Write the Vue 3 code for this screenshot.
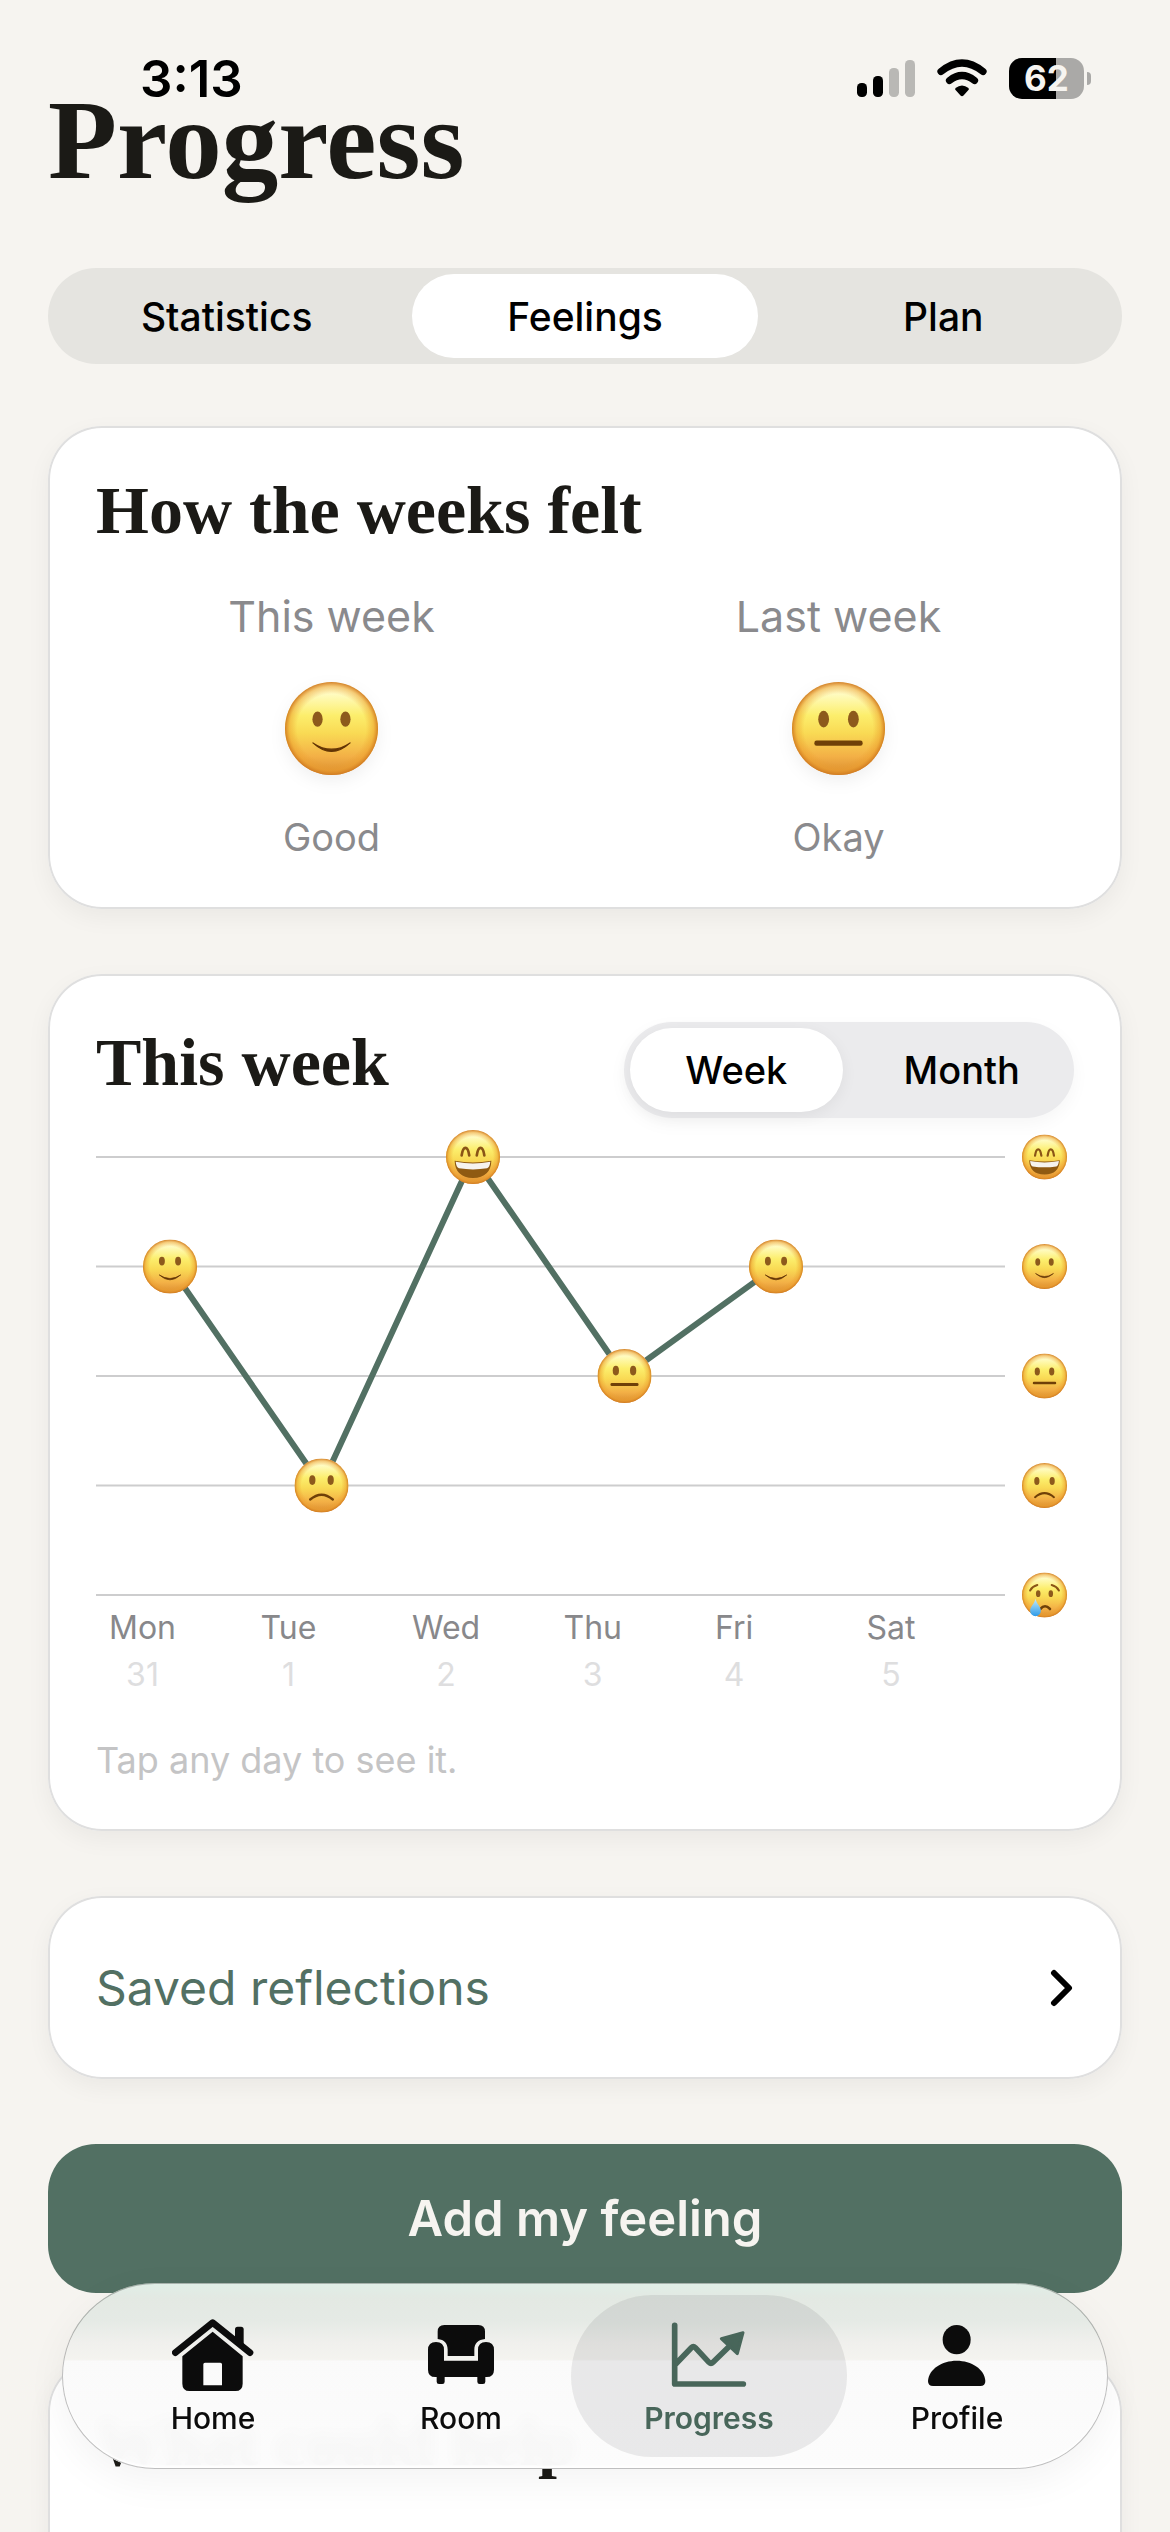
<script setup>
import { ref, computed } from 'vue'

const sections = ['Statistics', 'Feelings', 'Plan']
const section = ref('Feelings')
const ranges = ['Week', 'Month']
const range = ref('Week')

const summary = [
  { title: 'This week', mood: 'good', label: 'Good' },
  { title: 'Last week', mood: 'okay', label: 'Okay' }
]

const scale = ['great', 'good', 'okay', 'bad', 'awful']
const days = [
  { name: 'Mon', date: 31, mood: 'good' },
  { name: 'Tue', date: 1, mood: 'bad' },
  { name: 'Wed', date: 2, mood: 'great' },
  { name: 'Thu', date: 3, mood: 'okay' },
  { name: 'Fri', date: 4, mood: 'good' },
  { name: 'Sat', date: 5, mood: null }
]

const rowY = (i) => 27 + i * 109.5
const points = computed(() =>
  days
    .map((d, i) => ({ mood: d.mood, x: 74 + i * 151.5, y: rowY(scale.indexOf(d.mood)) }))
    .filter((p) => p.mood)
)
const line = computed(() => points.value.map((p) => `${p.x},${p.y}`).join(' '))

const tabs = ['Home', 'Room', 'Progress', 'Profile']
const tab = ref('Progress')
</script>

<template>
  <div class="screen">
    <svg class="defs" width="0" height="0" aria-hidden="true">
      <defs>
        <linearGradient id="face-fill" x1="0" y1="0" x2="0" y2="1">
          <stop offset="0" stop-color="#fffbd2" />
          <stop offset="0.12" stop-color="#fffcc4" />
          <stop offset="0.36" stop-color="#fcee6c" />
          <stop offset="0.55" stop-color="#f9da54" />
          <stop offset="0.8" stop-color="#f3b046" />
          <stop offset="1" stop-color="#d98b30" />
        </linearGradient>
        <radialGradient id="face-rim" cx="0.5" cy="0.5" r="0.5">
          <stop offset="0.74" stop-color="#eb9d2c" stop-opacity="0" />
          <stop offset="0.9" stop-color="#eb9d2c" stop-opacity="0.5" />
          <stop offset="1" stop-color="#d07a20" stop-opacity="0.95" />
        </radialGradient>
        <linearGradient id="tear-fill" x1="0" y1="0" x2="0" y2="1">
          <stop offset="0" stop-color="#c4ecff" />
          <stop offset="1" stop-color="#2e9be8" />
        </linearGradient>
        <symbol id="mood-great" viewBox="0 0 100 100">
          <circle cx="50" cy="50" r="50" fill="url(#face-fill)" />
          <circle cx="50" cy="50" r="50" fill="url(#face-rim)" />
          <path d="M29 47 Q31 33 36 33 T43 47 M57 47 Q59 33 64 33 T71 47" fill="none" stroke="#8a5516" stroke-width="5" stroke-linecap="round" />
          <path d="M16 57 Q50 63 84 57 Q83 88 50 89 Q17 88 16 57Z" fill="#8f5a12" />
          <path d="M18 59 Q50 65 82 59 Q81 70 76 71 Q50 75 24 71 Q19 70 18 59Z" fill="#f6f3ee" />
        </symbol>
        <symbol id="mood-good" viewBox="0 0 100 100">
          <circle cx="50" cy="50" r="50" fill="url(#face-fill)" />
          <circle cx="50" cy="50" r="50" fill="url(#face-rim)" />
          <ellipse cx="35" cy="40" rx="5.5" ry="8.2" fill="#8d5a1c" />
          <ellipse cx="65" cy="40" rx="5.5" ry="8.2" fill="#8d5a1c" />
          <path d="M30 65.5 Q50 79 70 65.5 Q50 84 30 65.5Z" fill="#633505" stroke="#633505" stroke-width="1.2" stroke-linejoin="round" />
        </symbol>
        <symbol id="mood-okay" viewBox="0 0 100 100">
          <circle cx="50" cy="50" r="50" fill="url(#face-fill)" />
          <circle cx="50" cy="50" r="50" fill="url(#face-rim)" />
          <ellipse cx="34" cy="40" rx="5.8" ry="9" fill="#8d5a1c" />
          <ellipse cx="66" cy="40" rx="5.8" ry="9" fill="#8d5a1c" />
          <rect x="24" y="63" width="52" height="5.5" rx="2.5" fill="#6f4008" />
        </symbol>
        <symbol id="mood-bad" viewBox="0 0 100 100">
          <circle cx="50" cy="50" r="50" fill="url(#face-fill)" />
          <circle cx="50" cy="50" r="50" fill="url(#face-rim)" />
          <ellipse cx="33" cy="40" rx="5.8" ry="9" fill="#8d5a1c" />
          <ellipse cx="67" cy="40" rx="5.8" ry="9" fill="#8d5a1c" />
          <path d="M29 76 Q50 58 71 76" fill="none" stroke="#6f4008" stroke-width="4.5" stroke-linecap="round" />
        </symbol>
        <symbol id="mood-awful" viewBox="0 0 100 100">
          <circle cx="50" cy="50" r="50" fill="url(#face-fill)" />
          <circle cx="50" cy="50" r="50" fill="url(#face-rim)" />
          <ellipse cx="36" cy="47" rx="5" ry="7.5" fill="#8d5a1c" />
          <ellipse cx="64" cy="47" rx="5" ry="7.5" fill="#8d5a1c" />
          <path d="M18 40 Q23 31 34 28 M66 28 Q77 31 82 40" fill="none" stroke="#8a5516" stroke-width="4.5" stroke-linecap="round" />
          <path d="M41 81 Q51 69 62 81" fill="none" stroke="#6f4008" stroke-width="6" stroke-linecap="round" />
          <path d="M30 58 C32 70 42 76 42 85 A12 12 0 0 1 18 85 C18 76 28 70 30 58Z" fill="url(#tear-fill)" />
        </symbol>
      </defs>
    </svg>

    <header class="status">
      <span class="time">3:13</span>
      <div class="indicators">
        <svg width="58" height="38" viewBox="0 0 58 38" aria-label="Signal">
          <rect x="0" y="24" width="10" height="14" rx="4.5" />
          <rect x="16" y="17" width="10" height="21" rx="4.5" />
          <rect x="32" y="9" width="10" height="29" rx="4.5" fill="#b9b8b5" />
          <rect x="48" y="1" width="10" height="37" rx="4.5" fill="#b9b8b5" />
        </svg>
        <svg width="50" height="38" viewBox="0 0 50 38" aria-label="Wi-Fi">
          <path d="M4 12.5 Q25 -4.5 46 12.5 M12.5 21.5 Q25 11.5 37.5 21.5" fill="none" stroke="#000" stroke-width="7.2" stroke-linecap="round" />
          <path d="M18.5 29 Q25 24 31.5 29 Q32.5 30.5 31 31.5 L26.5 36.5 Q25 38 23.5 36.5 L19 31.5 Q17.5 30.5 18.5 29Z" />
        </svg>
        <div class="battery"><span>62</span></div>
      </div>
    </header>

    <main>
      <h1>Progress</h1>

      <div class="segmented" role="tablist">
        <button v-for="s in sections" :key="s" type="button" role="tab" :aria-selected="section === s" :class="{ on: section === s }" @click="section = s">{{ s }}</button>
      </div>

      <section class="card">
        <h2>How the weeks felt</h2>
        <div class="weeks">
          <div v-for="w in summary" :key="w.title" class="week">
            <h3>{{ w.title }}</h3>
            <svg class="face" role="img" :aria-label="w.label"><use :href="`#mood-${w.mood}`" /></svg>
            <p>{{ w.label }}</p>
          </div>
        </div>
      </section>

      <section class="card">
        <div class="chart-head">
          <h2>This week</h2>
          <div class="segmented range" role="tablist">
            <button v-for="r in ranges" :key="r" type="button" role="tab" :aria-selected="range === r" :class="{ on: range === r }" @click="range = r">{{ r }}</button>
          </div>
        </div>
        <svg class="chart" viewBox="0 0 978 492" role="img" aria-label="Feelings by day">
          <line v-for="(m, i) in scale" :key="m" x1="0" x2="909" :y1="rowY(i)" :y2="rowY(i)" stroke="#cdcdce" stroke-width="2" />
          <polyline :points="line" fill="none" stroke="#527063" stroke-width="6" stroke-linejoin="round" />
          <use v-for="p in points" :key="p.x" :href="`#mood-${p.mood}`" :x="p.x - 27" :y="p.y - 27" width="54" height="54" />
          <use v-for="(m, i) in scale" :key="m" :href="`#mood-${m}`" x="926" :y="rowY(i) - 22.5" width="45" height="45" />
        </svg>
        <div class="days">
          <button v-for="d in days" :key="d.name" type="button">
            <span>{{ d.name }}</span>
            <span class="date">{{ d.date }}</span>
          </button>
        </div>
        <p class="hint">Tap any day to see it.</p>
      </section>

      <a class="card link" href="#">
        <span>Saved reflections</span>
        <svg width="24" height="38" viewBox="0 0 24 38" aria-hidden="true"><path d="M4 4 L19 19 L4 34" fill="none" stroke="#000" stroke-width="6" stroke-linecap="round" stroke-linejoin="round" /></svg>
      </a>

      <button class="primary" type="button">Add my feeling</button>

      <section class="card">
        <h2>What could help</h2>
        <div class="row"><span>Calm</span><span class="muted">4 days</span></div>
      </section>
    </main>

    <nav class="tabbar">
      <a v-for="t in tabs" :key="t" href="#" :class="{ current: tab === t }" @click.prevent="tab = t">
        <svg viewBox="0 0 246 216" aria-hidden="true">
          <g v-if="t === 'Home'">
            <path d="M10 101 L122 11 L234 101" fill="none" stroke="currentColor" stroke-width="20" stroke-linecap="round" stroke-linejoin="round" />
            <path d="M189 64 V31 Q189 23 197 23 H207 Q215 23 215 31 V84Z" />
            <path fill-rule="evenodd" d="M122 38 L212 112 V194 Q212 216 190 216 H53 Q31 216 31 194 V112Z M99 131 Q94 131 94 136 V199 H150 V136 Q150 131 145 131Z" />
          </g>
          <g v-else-if="t === 'Room'">
            <path d="M53 38 Q53 18 73 18 H175 Q195 18 195 38 V60 C174 62 163 74 163 92 V111 H83 V92 C83 74 73 62 53 60Z" />
            <path d="M24 93 Q24 69 48 69 Q72 69 72 93 V125 H174 V93 Q174 69 198 69 Q222 69 222 93 V152 Q222 174 200 174 H46 Q24 174 24 152Z" />
            <path d="M50 170 H74 V188 Q74 195 67 195 H57 Q50 195 50 188Z M172 170 H196 V188 Q196 195 189 195 H179 Q172 195 172 188Z" />
          </g>
          <g v-else-if="t === 'Progress'">
            <path d="M20 19 V195 H226 M24 134 L70 86 Q76 80 82 86 L123 130 Q129 136 135 130 L192 74" fill="none" stroke="currentColor" stroke-width="17" stroke-linecap="round" stroke-linejoin="round" />
            <path d="M160 59 L225 41 L208 104Z" stroke="currentColor" stroke-width="9" stroke-linejoin="round" />
          </g>
          <g v-else>
            <ellipse cx="122" cy="62" rx="42" ry="44" />
            <path d="M36 186 C38 150 78 125 122 125 S206 150 208 186 Q208 201 193 201 H51 Q36 201 36 186Z" />
          </g>
        </svg>
        <span>{{ t }}</span>
      </a>
    </nav>
  </div>
</template>

<style>
body {
  background: #f6f4f0;
}
</style>

<style scoped>
.screen {
  position: relative;
  height: 100vh;
  overflow: hidden;
  background: #f6f4f0;
  color: #000;
  font-family: Inter, "Liberation Sans", sans-serif;
}
.screen * {
  box-sizing: border-box;
}
.defs {
  position: absolute;
}
h1, h2, h3, p {
  margin: 0;
}
button {
  margin: 0;
  padding: 0;
  border: 0;
  background: none;
  color: inherit;
  font: inherit;
}
a {
  color: inherit;
  text-decoration: none;
}

.status {
  position: absolute;
  inset: 0 0 auto;
  height: 156px;
  padding: 0 86px 0 140px;
  display: flex;
  align-items: center;
  justify-content: space-between;
}
.time {
  font-size: 51px;
  font-weight: 600;
}
.indicators {
  display: flex;
  align-items: center;
  gap: 22px;
}
.battery {
  position: relative;
  width: 75px;
  height: 41px;
  border-radius: 13px;
  background: linear-gradient(to right, #000 63%, #aaa9a7 63%);
  color: #f6f4f0;
  font-size: 35px;
  font-weight: 700;
  line-height: 41px;
  text-align: center;
}
.battery::after {
  content: "";
  position: absolute;
  left: 78px;
  top: 14px;
  width: 4px;
  height: 13px;
  border-radius: 0 4px 4px 0;
  background: #aaa9a7;
}

main {
  padding: 85px 48px 0;
}
h1, h2 {
  color: #1b1a16;
  font-family: "Liberation Serif", "Times New Roman", serif;
  font-weight: 700;
}
h1 {
  font-size: 113px;
  line-height: 110px;
}
h2 {
  font-size: 68px;
  line-height: 72px;
  white-space: nowrap;
}

.segmented {
  display: flex;
  gap: 13px;
  height: 96px;
  margin-top: 73px;
  padding: 6px;
  border-radius: 48px;
  background: #e5e4e0;
}
.segmented button {
  flex: 1;
  border-radius: 42px;
  font-size: 39px;
  font-weight: 500;
}
.segmented .on {
  background: #fff;
}
.segmented.range {
  width: 450px;
  margin: 0;
  background: #ebebed;
  box-shadow: 0 6px 18px rgba(0, 0, 0, 0.04);
}
.segmented.range button {
  font-size: 38px;
}
.segmented.range .on {
  box-shadow: 0 4px 16px rgba(0, 0, 0, 0.06);
}

.card {
  margin-top: 65px;
  padding: 48px;
  border-radius: 54px;
  background: #fff;
  box-shadow: inset 0 0 0 2px #dfdfdf, 0 8px 24px rgba(0, 0, 0, 0.05);
}
.segmented + .card {
  margin-top: 62px;
}

.weeks {
  display: flex;
  gap: 36px;
  margin-top: 42px;
}
.week {
  flex: 1;
  display: flex;
  flex-direction: column;
  align-items: center;
  gap: 38px;
  color: #8a8a8d;
  font-size: 38px;
  line-height: 48px;
}
.week h3 {
  font-size: 43px;
  font-weight: 400;
  line-height: 56px;
}
.face {
  width: 93px;
  height: 93px;
  overflow: visible;
  filter: drop-shadow(0 6px 8px rgba(0, 0, 0, 0.06));
}

.chart-head {
  display: flex;
  justify-content: space-between;
  align-items: flex-start;
}
.chart-head h2 {
  line-height: 80px;
}
.chart {
  display: block;
  width: 100%;
  margin-top: 12px;
  overflow: visible;
}
.days {
  display: grid;
  grid-template-columns: repeat(6, 1fr);
  justify-items: start;
  margin: -18px 69px 0 0;
}
.days button {
  display: flex;
  flex-direction: column;
  align-items: center;
  padding-left: 13px;
  color: #88888b;
  font-size: 32px;
  line-height: 47px;
}
.days .date {
  color: #dededf;
}
.hint {
  margin-top: 39px;
  color: #c4c4c5;
  font-size: 36px;
  line-height: 46px;
}

.link {
  display: flex;
  align-items: center;
  justify-content: space-between;
  padding: 60px 48px;
  color: #527063;
  font-size: 48px;
  line-height: 63px;
}

.primary {
  display: block;
  width: 100%;
  height: 149px;
  margin-top: 65px;
  border-radius: 48px;
  background: #527063;
  color: #f6f4f0;
  font-size: 49px;
  font-weight: 600;
}

.row {
  display: flex;
  justify-content: space-between;
  margin-top: 43px;
  font-size: 43px;
  line-height: 56px;
}
.muted {
  color: #8a8a8d;
}

.tabbar {
  position: absolute;
  left: 62px;
  right: 62px;
  bottom: 63px;
  display: flex;
  padding: 12px 27px;
  border-radius: 93px;
  background: linear-gradient(to bottom, #e0efe7 0, #e3e9e3 8%, #e5eae5 20%, #f0f0ed 32%, #f4f3ef 41%, rgba(250, 250, 250, 0.97) 42%, rgba(252, 252, 252, 0.97) 100%);
  backdrop-filter: blur(8px);
  box-shadow: inset 0 0 0 1px rgba(0, 0, 0, 0.25), inset 0 -3px 2px #fff, 0 12px 40px rgba(0, 0, 0, 0.05);
  color: #0c0c0c;
}
.tabbar a {
  flex: 1;
  display: flex;
  flex-direction: column;
  align-items: center;
  gap: 9px;
  margin: 0 -14px;
  padding: 24px 0 21px;
  border-radius: 81px;
  font-size: 30px;
  font-weight: 500;
  line-height: 36px;
}
.tabbar svg {
  width: 82px;
  height: 72px;
  fill: currentColor;
}
.tabbar .current {
  background: rgba(0, 0, 10, 0.075);
  color: #48665a;
  font-weight: 600;
}
</style>
